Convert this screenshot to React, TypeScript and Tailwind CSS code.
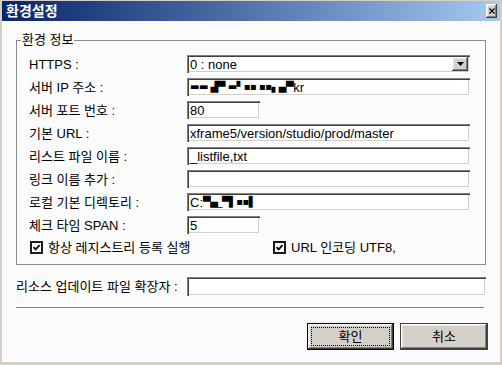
import React from "react";

const sunken =
  "bg-white shadow-[inset_1px_1px_0_#808080,inset_2px_2px_0_#404040,inset_-1px_-1px_0_#ffffff,inset_-2px_-2px_0_#d4d0c8]";
const raised =
  "bg-[#d4d0c8] shadow-[inset_-1px_-1px_0_#404040,inset_1px_1px_0_#ffffff,inset_-2px_-2px_0_#808080,inset_2px_2px_0_#e8e6e1]";

function Row({ label, children }: { label: string; children: React.ReactNode }) {
  return (
    <div className="flex items-center h-[18px]">
      <span className="w-[158px] shrink-0 leading-none whitespace-nowrap">{label}</span>
      {children}
    </div>
  );
}

function Field({ w, children }: { w: string; children?: React.ReactNode }) {
  return (
    <div className={`${w} h-[18px] ${sunken} pl-[3px] flex items-center leading-none whitespace-nowrap overflow-hidden`}>
      {children}
    </div>
  );
}

function Check({ label, className }: { label: string; className?: string }) {
  return (
    <div className={`flex items-center gap-[5px] ${className ?? ""}`}>
      <div className="w-[13px] h-[13px] border-2 border-[#1a1a1a] bg-white flex items-center justify-center shrink-0">
        <svg width="9" height="9" viewBox="0 0 9 9">
          <path d="M1.5 4.2 L3.6 6.4 L7.6 2.2" fill="none" stroke="#000" strokeWidth="1.8" />
        </svg>
      </div>
      <span className="leading-none whitespace-nowrap">{label}</span>
    </div>
  );
}

export default function App() {
  return (
    <div className="w-[502px] h-[365px] bg-[#d4d0c8] flex flex-col pt-[1px] px-[2px] pb-[3px] overflow-hidden text-[13px] text-black font-['Liberation_Sans','Noto_Sans_CJK_KR',sans-serif]">
      {/* title bar */}
      <div className="h-[20px] shrink-0 bg-gradient-to-r from-[#0a246a] to-[#a6caf0] flex items-center justify-between pl-[4px] pr-[3px]">
        <span className="text-white font-bold text-[14px] leading-none">환경설정</span>
        <div className={`w-[11px] h-[14px] ${raised} flex items-center justify-center`}>
          <svg width="6" height="6" viewBox="0 0 6 6">
            <path d="M0.5 0.5 L5.5 5.5 M5.5 0.5 L0.5 5.5" stroke="#000" strokeWidth="1.2" />
          </svg>
        </div>
      </div>

      {/* body */}
      <div className="flex-1 bg-[#fbfbfb] flex flex-col pl-[14px] pr-[12px] pt-[12px]">
        <fieldset className="w-[470px] border border-[#8c8c8c] p-0 m-0">
          <legend className="ml-[4px] px-[1px] leading-[14px]">환경 정보</legend>
          <div className="pl-[12px] pt-[8px] pb-[10px] flex flex-col">
            <div className="flex flex-col gap-[5px]">
              <Row label="HTTPS :">
                <div className={`w-[283px] h-[18px] ${sunken} flex items-center pl-[3px] pr-[2px] leading-none`}>
                  <span className="flex-1">0 : none</span>
                  <div className={`w-[16px] h-[14px] ${raised} flex items-center justify-center`}>
                    <svg width="7" height="4" viewBox="0 0 7 4">
                      <path d="M0 0 L7 0 L3.5 4 Z" fill="#000" />
                    </svg>
                  </div>
                </div>
              </Row>
              <Row label="서버 IP 주소 :">
                <Field w="w-[283px]">
                  <span className="font-['DejaVu_Sans',sans-serif] tracking-[-0.5px] text-[10px]">▬▬ ▟▀ ▬▘▪▪ ▪▪▖▄▀</span>
                  <span>kr</span>
                </Field>
              </Row>
              <Row label="서버 포트 번호 :">
                <Field w="w-[73px]">80</Field>
              </Row>
              <Row label="기본 URL :">
                <Field w="w-[283px]">xframe5/version/studio/prod/master</Field>
              </Row>
              <Row label="리스트 파일 이름 :">
                <Field w="w-[283px]">_listfile,txt</Field>
              </Row>
              <Row label="링크 이름 추가 :">
                <Field w="w-[283px]" />
              </Row>
              <Row label="로컬 기본 디렉토리 :">
                <Field w="w-[283px]">
                  <span>C:</span>
                  <span className="font-['DejaVu_Sans',sans-serif] tracking-[-0.5px] text-[10px]">▀▄_▀▌▪▪▌</span>
                </Field>
              </Row>
              <Row label="체크 타임 SPAN :">
                <Field w="w-[73px]">5</Field>
              </Row>
            </div>
            <div className="flex items-center h-[14px] mt-[6px] pl-[1px]">
              <Check label="항상 레지스트리 등록 실행" className="w-[243px]" />
              <Check label="URL 인코딩 UTF8," />
            </div>
          </div>
        </fieldset>

        <div className="w-[470px] flex items-center h-[19px] mt-[12px]">
          <span className="w-[171px] shrink-0 leading-none whitespace-nowrap">리소스 업데이트 파일 확장자 :</span>
          <div className={`flex-1 h-[19px] ${sunken}`} />
        </div>

        <div className="w-[468px] mt-[11px] h-px bg-[#808080]" />
        <div className="w-[468px] h-px bg-white" />

        <div className="flex justify-end gap-[6px] mt-[14px]">
          <div className="w-[87px] h-[27px] border border-black">
            <div className={`w-full h-full ${raised} flex items-center justify-center p-[3px]`}>
              <div className="w-full h-full border border-dotted border-black flex items-center justify-center leading-none">
                확인
              </div>
            </div>
          </div>
          <div className={`w-[88px] h-[27px] ${raised} flex items-center justify-center leading-none border border-[#404040]`}>
            취소
          </div>
        </div>
      </div>
    </div>
  );
}
